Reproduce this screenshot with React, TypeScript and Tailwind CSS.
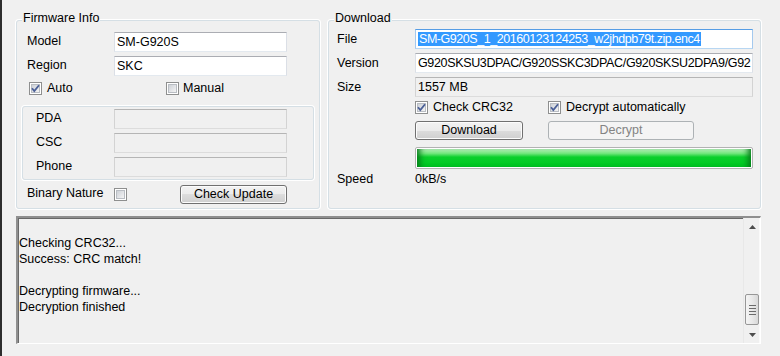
import type { ReactNode } from 'react'

function Check({ checked }: { checked?: boolean }) {
  return (
    <svg width="13" height="13" viewBox="0 0 13 13" className="shrink-0">
      <defs>
        <linearGradient id="cbg" x1="0" y1="0" x2="1" y2="1">
          <stop offset="0" stopColor="#cbcfd5" />
          <stop offset="1" stopColor="#f6f6f6" />
        </linearGradient>
      </defs>
      <rect x="0.5" y="0.5" width="12" height="12" fill="#fff" stroke="#8e8f8f" />
      <rect x="2.5" y="2.5" width="8" height="8" fill="url(#cbg)" stroke="#b9bdc3" />
      {checked && (
        <path d="M3 6.2 L5.3 9 L10 3.2" fill="none" stroke="#4a5f97" strokeWidth="1.8" />
      )}
    </svg>
  )
}

function Field({ children, tone = 'white', className = '' }: { children?: ReactNode; tone?: 'white' | 'off' | 'focus'; className?: string }) {
  const tones = {
    white: 'bg-white border-[#abadb3] border-l-[#dbdfe6] border-r-[#dbdfe6] border-b-[#e3e9ef]',
    off: 'bg-[#f0f0f0] border-[#b5b5b5] border-l-[#d3d3d3] border-r-[#d3d3d3] border-b-[#dcdcdc]',
    focus: 'bg-white border-[#569de5] border-l-[#a4c9ee] border-r-[#a4c9ee] border-b-[#b7d6f2]',
  }
  return (
    <div className={`h-[20px] border pl-[2px] leading-[18px] whitespace-nowrap overflow-hidden ${tones[tone]} ${className}`}>
      {children}
    </div>
  )
}

function Button({ children, disabled, className = '' }: { children: ReactNode; disabled?: boolean; className?: string }) {
  return disabled ? (
    <div className={`h-[19px] border border-[#adb2b5] rounded-[3px] bg-[#f4f4f4] text-[#838383] flex items-center justify-center ${className}`}>
      {children}
    </div>
  ) : (
    <div className={`h-[19px] border border-[#707070] rounded-[3px] bg-[linear-gradient(#f2f2f2,#ebebeb_50%,#dddddd_50%,#cfcfcf)] shadow-[inset_0_0_0_1px_#fcfcfc] flex items-center justify-center ${className}`}>
      {children}
    </div>
  )
}

function Group({ title, className = '', children }: { title: string; className?: string; children: ReactNode }) {
  return (
    <div className={`relative h-[189px] border border-[#d5dfe5] rounded-[3px] shadow-[0_0_0_1px_#fff] ${className}`}>
      <span className="absolute left-[5px] -top-[10px] px-[1px] leading-[14px] bg-[#f0f0f0]">{title}</span>
      {children}
    </div>
  )
}

function Arrow({ up }: { up?: boolean }) {
  return (
    <svg width="7" height="4" viewBox="0 0 7 4">
      <path d={up ? 'M0 4 L3.5 0 L7 4 Z' : 'M0 0 L7 0 L3.5 4 Z'} fill="#4d4d4d" />
    </svg>
  )
}

export default function App() {
  const log = ['', 'Checking CRC32...', 'Success: CRC match!', '', 'Decrypting firmware...', 'Decryption finished']

  return (
    <div className="w-[780px] h-[356px] bg-[#f0f0f0] border-l-2 border-[#2d2d2d] pl-[14px] pt-[20px] text-[12.5px] text-black font-['Liberation_Sans',Arial,sans-serif] overflow-hidden">
      <div className="flex gap-[8px]">
        <Group title="Firmware Info" className="w-[304px]">
          <div className="px-[5px] pt-[11px]">
            <div className="pl-[5px] flex flex-col gap-[4px]">
              <div className="flex h-[20px]">
                <div className="w-[87px] leading-[18px]">Model</div>
                <Field className="w-[173px]">SM-G920S</Field>
              </div>
              <div className="flex h-[20px]">
                <div className="w-[87px] leading-[18px]">Region</div>
                <Field className="w-[173px]">SKC</Field>
              </div>
            </div>
            <div className="flex items-center h-[24px] pl-[7px]">
              <div className="flex items-center gap-[5px] w-[137px]">
                <Check checked />
                <span>Auto</span>
              </div>
              <div className="flex items-center gap-[4px]">
                <Check />
                <span>Manual</span>
              </div>
            </div>
            <div className="mt-[6px] h-[74px] border border-[#d5dfe5] rounded-[3px] shadow-[0_0_0_1px_#fff] pl-[13px] pt-[2px] flex flex-col gap-[4px]">
              {['PDA', 'CSC', 'Phone'].map((l) => (
                <div key={l} className="flex h-[20px]">
                  <div className="w-[78px] leading-[18px]">{l}</div>
                  <Field tone="off" className="w-[173px]" />
                </div>
              ))}
            </div>
            <div className="mt-[5px] flex items-center h-[19px] pl-[5px]">
              <div className="w-[87px] -mt-[2px]">Binary Nature</div>
              <Check />
              <Button className="ml-[53px] w-[107px]">Check Update</Button>
            </div>
          </div>
        </Group>

        <Group title="Download" className="w-[433px]">
          <div className="pl-[8px] pr-[7px] pt-[8px]">
            <div className="flex flex-col gap-[4px]">
              <div className="flex h-[20px]">
                <div className="w-[78px] leading-[21px]">File</div>
                <Field tone="focus" className="flex-1">
                  <span className="bg-[#3399ff] text-white px-[1px] tracking-[-0.45px]">SM-G920S_1_20160123124253_w2jhdpb79t.zip.enc4</span>
                </Field>
              </div>
              <div className="flex h-[20px]">
                <div className="w-[78px] leading-[21px]">Version</div>
                <Field className="flex-1 tracking-[-0.35px]">G920SKSU3DPAC/G920SSKC3DPAC/G920SKSU2DPA9/G92</Field>
              </div>
              <div className="flex h-[20px]">
                <div className="w-[78px] leading-[20px]">Size</div>
                <Field tone="off" className="flex-1">1557 MB</Field>
              </div>
            </div>
            <div className="pl-[78px]">
              <div className="flex items-center h-[20px]">
                <div className="flex items-center gap-[5px] w-[133px]">
                  <Check checked />
                  <span>Check CRC32</span>
                </div>
                <div className="flex items-center gap-[5px]">
                  <Check checked />
                  <span>Decrypt automatically</span>
                </div>
              </div>
              <div className="flex mt-[4px] gap-[25px]">
                <Button className="w-[108px]">Download</Button>
                <Button disabled className="w-[146px]">Decrypt</Button>
              </div>
              <div className="mt-[7px] h-[22px] border border-[#b2b2b2] rounded-[2px] bg-white p-[1px]">
                <div className="h-full bg-[linear-gradient(#c6f7c6,#6fe67a_25%,#0bcf2b_45%,#00c823)] shadow-[inset_7px_0_6px_-4px_#067a1a,inset_-7px_0_6px_-4px_#067a1a]" />
              </div>
            </div>
            <div className="flex h-[20px] leading-[20px]">
              <div className="w-[78px]">Speed</div>
              <div>0kB/s</div>
            </div>
          </div>
        </Group>
      </div>

      <div className="mt-[7px] w-[745px] h-[128px] flex border-t-2 border-l-2 border-t-[#8f8f8f] border-l-[#8f8f8f] border-b border-r border-b-white border-r-white shadow-[inset_1px_1px_0_#696969]">
        <div className="flex-1 pl-[1px] pt-[1px] leading-[16px]">
          {log.map((l, i) => (
            <div key={i} className="h-[16px]">{l}</div>
          ))}
        </div>
        <div className="w-[17px] flex flex-col bg-[#f0f0f0] border-l border-[#e8e8e8] shadow-[inset_-1px_0_0_#fafafa]">
          <div className="h-[17px] flex items-center justify-center">
            <Arrow up />
          </div>
          <div className="flex-1" />
          <div className="h-[31px] mx-[1px] border border-[#979797] rounded-[2px] bg-[linear-gradient(90deg,#f4f4f4,#e9e9e9_50%,#d8d8d8)] flex flex-col items-center justify-center gap-[2px]">
            <div className="w-[7px] h-[1px] bg-[#6a6a6a]" />
            <div className="w-[7px] h-[1px] bg-[#6a6a6a]" />
            <div className="w-[7px] h-[1px] bg-[#6a6a6a]" />
            <div className="w-[7px] h-[1px] bg-[#6a6a6a]" />
          </div>
          <div className="h-[17px] mt-[1px] flex items-center justify-center">
            <Arrow />
          </div>
        </div>
      </div>
    </div>
  )
}
